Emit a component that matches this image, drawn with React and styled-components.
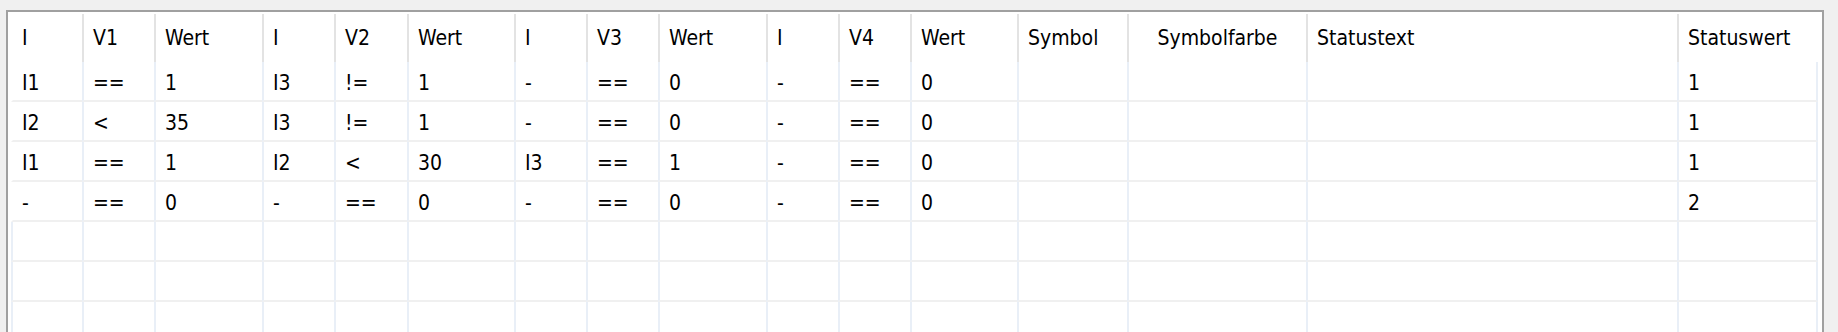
import React from "react";
import styled, { createGlobalStyle } from "styled-components";

const GlobalStyle = createGlobalStyle`
  body {
    margin: 0;
    background: #f0f0f0;
    font-family: "DejaVu Sans Condensed", "DejaVu Sans", sans-serif;
    font-stretch: condensed;
  }
`;

// column widths measured from the grid lines
const widths = [71, 72, 108, 72, 73, 107, 72, 72, 108, 72, 72, 107, 110, 179, 371, 141];

const headers = [
  "I", "V1", "Wert", "I", "V2", "Wert", "I", "V3", "Wert", "I", "V4", "Wert",
  "Symbol", "Symbolfarbe", "Statustext", "Statuswert",
];

const rows = [
  ["I1", "==", "1", "I3", "!=", "1", "-", "==", "0", "-", "==", "0", "", "", "", "1"],
  ["I2", "<", "35", "I3", "!=", "1", "-", "==", "0", "-", "==", "0", "", "", "", "1"],
  ["I1", "==", "1", "I2", "<", "30", "I3", "==", "1", "-", "==", "0", "", "", "", "1"],
  ["-", "==", "0", "-", "==", "0", "-", "==", "0", "-", "==", "0", "", "", "", "2"],
  Array(16).fill(""),
  Array(16).fill(""),
  Array(16).fill(""),
];

function App() {
  return (
    <>
      <GlobalStyle />
      <Frame>
        <Grid>
          {headers.map((h, i) => (
            <HeaderCell key={"h" + i} $first={i === 0} $center={h === "Symbolfarbe"}>
              {h}
            </HeaderCell>
          ))}
          {rows.map((row, r) => {
            const empty = row.every(v => v === "");
            return row.map((v, c) => (
              <Cell
                key={r + "-" + c}
                $first={c === 0}
                $last={c === row.length - 1}
                $empty={empty}
              >
                {v}
              </Cell>
            ));
          })}
        </Grid>
      </Frame>
    </>
  );
}

export default App;

const Frame = styled.div`
  box-sizing: border-box;
  margin: 10px 0 0 6px;
  width: 1818px;
  height: 340px;
  padding: 0 2px 0 3px;
  background: #ffffff;
  border: 2px solid #a0a0a0;
  overflow: hidden;
`;

const Grid = styled.div`
  display: grid;
  grid-template-columns: ${widths.map(w => w + "px").join(" ")};
  grid-auto-rows: auto;
  color: #000;
  font-size: 21px;
`;

const HeaderCell = styled.div`
  box-sizing: border-box;
  height: 48px;
  margin-top: 2px;
  display: flex;
  align-items: center;
  justify-content: ${p => (p.$center ? "center" : "flex-start")};
  padding-left: ${p => (p.$center ? "0" : "9px")};
  padding-bottom: 1px;
  border-left: 2px solid ${p => (p.$first ? "transparent" : "#e3e3e3")};
  white-space: nowrap;
`;

const Cell = styled.div`
  box-sizing: border-box;
  height: 40px;
  display: flex;
  align-items: center;
  padding: 3px 0 0 9px;
  border-bottom: 2px solid #f0f0f0;
  border-left: 2px solid
    ${p => (p.$first && !p.$empty ? "transparent" : "#e9eff7")};
  border-right: ${p => (p.$last ? "2px solid #e9eff7" : "none")};
  white-space: nowrap;
`;
